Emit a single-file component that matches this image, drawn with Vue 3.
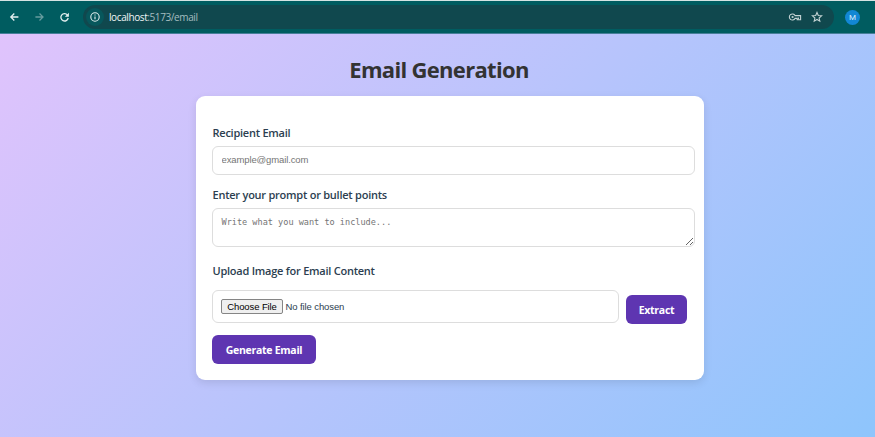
<script setup>
import { ref } from 'vue'
const email = ref('')
const prompt = ref('')
</script>

<template>
  <div class="window">
    <header class="toolbar">
      <svg class="nav" viewBox="0 0 16 16"><path d="M12.4 8H4.8M8.3 4.5 4.8 8l3.5 3.5" /></svg>
      <svg class="nav dim" viewBox="0 0 16 16"><path d="M4.4 8H12M8.5 4.5 12 8l-3.5 3.5" /></svg>
      <svg class="nav" viewBox="0 0 16 16"><path d="M11.4 5.9A3.7 3.7 0 1 0 12.2 9" /><path class="solid" d="M12.9 3.8v4H8.9z" /></svg>
      <div class="address">
        <span class="info">
          <svg viewBox="0 0 12 12"><circle cx="6" cy="6" r="4.2" /><path d="M6 5.6v2.6M6 3.6v1" /></svg>
        </span>
        <span class="url"><b>localhost</b>:5173/email</span>
        <svg class="key" viewBox="0 0 14 12"><path d="M7 4.6A3 3 0 1 0 7 7.4h2.2v1.3h3.4V4.6z" /><path d="M10.4 6.6v2" /><circle cx="4.6" cy="6" r="1.1" /></svg>
        <svg class="star" viewBox="0 0 12 12"><path d="m6 1.5 1.3 3 3.3.3-2.5 2.2.7 3.2L6 8.5l-2.8 1.7.7-3.2L1.4 4.8l3.3-.3z" /></svg>
      </div>
      <span class="avatar">M</span>
    </header>
    <main class="page">
      <h1>Email Generation</h1>
      <form class="card" @submit.prevent>
        <label for="recipient">Recipient Email</label>
        <input id="recipient" v-model="email" type="email" placeholder="example@gmail.com" />
        <label for="prompt">Enter your prompt or bullet points</label>
        <textarea id="prompt" v-model="prompt" placeholder="Write what you want to include..."></textarea>
        <label>Upload Image for Email Content</label>
        <div class="upload">
          <div class="file"><span class="choose">Choose File</span><span class="none">No file chosen</span></div>
          <button type="button" class="extract">Extract</button>
        </div>
        <button type="submit" class="generate">Generate Email</button>
      </form>
    </main>
  </div>
</template>

<style>
body { margin: 0; overflow: hidden; }
</style>

<style scoped>
* { box-sizing: border-box; }
.window {
  display: flex;
  flex-direction: column;
  height: 437px;
  font-family: "Open Sans", "Noto Sans", sans-serif;
}
.toolbar {
  display: flex;
  align-items: center;
  height: 34px;
  padding: 0 15px 0 6px;
  background: #005c60;
  border-top: 1px solid #d5e3e3;
  border-bottom: 1px solid #467f99;
}
svg { fill: none; stroke: #e4eff0; stroke-width: 1.3; }
.nav { width: 16px; height: 16px; margin-right: 9px; flex: none; }
.dim { stroke: #669c9f; }
.solid { fill: #e4eff0; stroke: none; }
.address {
  display: flex;
  align-items: center;
  flex: 1;
  height: 24px;
  margin-left: 2px;
  margin-right: 11px;
  padding: 0 11px 0 3px;
  border-radius: 12px;
  background: #10484e;
}
.info {
  display: flex;
  align-items: center;
  justify-content: center;
  width: 18px;
  height: 18px;
  border-radius: 50%;
  background: #07575c;
}
.info svg { width: 12px; height: 12px; stroke-width: 1.1; }
.url {
  flex: 1;
  margin-left: 5px;
  color: #a5bdc0;
  font-size: 10px;
  line-height: 14px;
  letter-spacing: -.4px;
  white-space: nowrap;
}
.url b { color: #f0f6f6; font-weight: 500; }
.key { width: 14px; height: 12px; stroke: #c4d3d4; stroke-width: 1.1; }
.key circle { fill: #c4d3d4; stroke: none; }
.star { width: 12px; height: 12px; margin-left: 9px; stroke: #c4d3d4; stroke-width: 1.1; }
.avatar {
  width: 15px;
  height: 15px;
  border-radius: 50%;
  background: #1287d4;
  color: #d8ecfa;
  font: 8px/15px Roboto, sans-serif;
  text-align: center;
}
.page {
  flex: 1;
  padding-top: 20px;
  background: linear-gradient(135deg, #e0c3fc 0%, #8ec5fc 100%);
}
h1 {
  margin: 0 0 12px;
  padding-left: 3px;
  color: #333;
  font-size: 22px;
  font-weight: 700;
  line-height: 30px;
  letter-spacing: -.68px;
  text-align: center;
}
.card {
  display: flex;
  flex-direction: column;
  align-items: flex-start;
  width: 508px;
  height: 284px;
  margin-left: 196px;
  padding: 29px 9px 0 16px;
  border-radius: 9px;
  background: #fff;
  box-shadow: 0 3px 9px rgba(0, 0, 0, .1);
}
label {
  padding-left: .5px;
  color: #2c3e50;
  font-size: 11px;
  font-weight: 600;
  line-height: 16px;
  letter-spacing: -.24px;
  white-space: nowrap;
}
input, textarea, .file {
  border: 1px solid #ddd;
  border-radius: 6px;
  background: #fff;
  outline: 0;
}
input {
  width: 483px;
  height: 29px;
  margin: 5px 0 12px;
  padding: 0 8px 2px 8.5px;
  font: 9.5px "Liberation Sans", Arial, sans-serif;
  letter-spacing: -.12px;
}
textarea {
  width: 483px;
  height: 39px;
  margin: 5px 0 16px;
  padding: 7px 8px 7px 8.5px;
  font: 8.55px/12px "DejaVu Sans Mono", monospace;
  overflow: hidden;
}
input::placeholder, textarea::placeholder { color: #757575; }
.upload {
  display: flex;
  align-items: flex-end;
  gap: 7px;
  height: 34px;
  margin: 11px 0;
}
.file {
  display: flex;
  align-items: center;
  width: 407px;
  height: 33px;
  margin-bottom: 1px;
  padding-left: 8px;
  color: #2c3e50;
  font: 9.5px "Liberation Sans", Arial, sans-serif;
  letter-spacing: -.1px;
}
.choose {
  width: 62px;
  height: 15px;
  margin-right: 2.5px;
  border: 1px solid #858585;
  border-radius: 2px;
  background: #efefef;
  color: #000;
  line-height: 13px;
  text-align: center;
}
button {
  padding: 0;
  border: 0;
  border-radius: 6px;
  background: #5e35b1;
  color: #fff;
  font: 700 10.5px "Open Sans", "Noto Sans", sans-serif;
  letter-spacing: -.28px;
}
.extract { width: 61px; height: 29px; }
.generate { width: 104px; height: 29px; }
</style>
